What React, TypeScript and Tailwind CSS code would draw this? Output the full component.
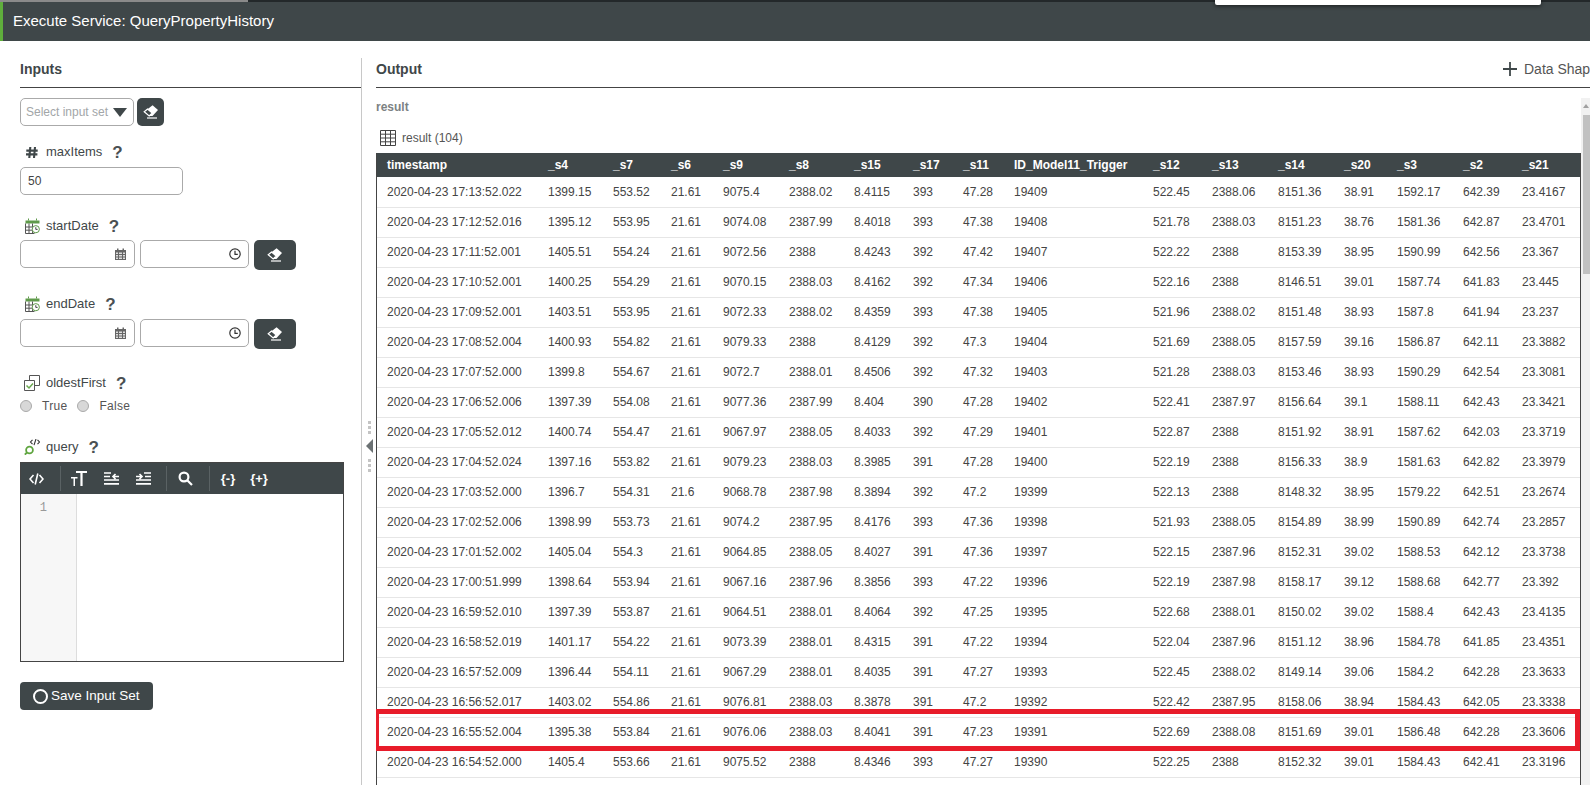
import React from "react";

const HEADERS = ["timestamp", "_s4", "_s7", "_s6", "_s9", "_s8", "_s15", "_s17", "_s11", "ID_Model11_Trigger", "_s12", "_s13", "_s14", "_s20", "_s3", "_s2", "_s21"];

const RAW = `17:13:52.022 1399.15 553.52 21.61 9075.4 2388.02 8.4115 393 47.28 19409 522.45 2388.06 8151.36 38.91 1592.17 642.39 23.4167
17:12:52.016 1395.12 553.95 21.61 9074.08 2387.99 8.4018 393 47.38 19408 521.78 2388.03 8151.23 38.76 1581.36 642.87 23.4701
17:11:52.001 1405.51 554.24 21.61 9072.56 2388 8.4243 392 47.42 19407 522.22 2388 8153.39 38.95 1590.99 642.56 23.367
17:10:52.001 1400.25 554.29 21.61 9070.15 2388.03 8.4162 392 47.34 19406 522.16 2388 8146.51 39.01 1587.74 641.83 23.445
17:09:52.001 1403.51 553.95 21.61 9072.33 2388.02 8.4359 393 47.38 19405 521.96 2388.02 8151.48 38.93 1587.8 641.94 23.237
17:08:52.004 1400.93 554.82 21.61 9079.33 2388 8.4129 392 47.3 19404 521.69 2388.05 8157.59 39.16 1586.87 642.11 23.3882
17:07:52.000 1399.8 554.67 21.61 9072.7 2388.01 8.4506 392 47.32 19403 521.28 2388.03 8153.46 38.93 1590.29 642.54 23.3081
17:06:52.006 1397.39 554.08 21.61 9077.36 2387.99 8.404 390 47.28 19402 522.41 2387.97 8156.64 39.1 1588.11 642.43 23.3421
17:05:52.012 1400.74 554.47 21.61 9067.97 2388.05 8.4033 392 47.29 19401 522.87 2388 8151.92 38.91 1587.62 642.03 23.3719
17:04:52.024 1397.16 553.82 21.61 9079.23 2388.03 8.3985 391 47.28 19400 522.19 2388 8156.33 38.9 1581.63 642.82 23.3979
17:03:52.000 1396.7 554.31 21.6 9068.78 2387.98 8.3894 392 47.2 19399 522.13 2388 8148.32 38.95 1579.22 642.51 23.2674
17:02:52.006 1398.99 553.73 21.61 9074.2 2387.95 8.4176 393 47.36 19398 521.93 2388.05 8154.89 38.99 1590.89 642.74 23.2857
17:01:52.002 1405.04 554.3 21.61 9064.85 2388.05 8.4027 391 47.36 19397 522.15 2387.96 8152.31 39.02 1588.53 642.12 23.3738
17:00:51.999 1398.64 553.94 21.61 9067.16 2387.96 8.3856 393 47.22 19396 522.19 2387.98 8158.17 39.12 1588.68 642.77 23.392
16:59:52.010 1397.39 553.87 21.61 9064.51 2388.01 8.4064 392 47.25 19395 522.68 2388.01 8150.02 39.02 1588.4 642.43 23.4135
16:58:52.019 1401.17 554.22 21.61 9073.39 2388.01 8.4315 391 47.22 19394 522.04 2387.96 8151.12 38.96 1584.78 641.85 23.4351
16:57:52.009 1396.44 554.11 21.61 9067.29 2388.01 8.4035 391 47.27 19393 522.45 2388.02 8149.14 39.06 1584.2 642.28 23.3633
16:56:52.017 1403.02 554.86 21.61 9076.81 2388.03 8.3878 391 47.2 19392 522.42 2387.95 8158.06 38.94 1584.43 642.05 23.3338
16:55:52.004 1395.38 553.84 21.61 9076.06 2388.03 8.4041 391 47.23 19391 522.69 2388.08 8151.69 39.01 1586.48 642.28 23.3606
16:54:52.000 1405.4 553.66 21.61 9075.52 2388 8.4346 393 47.27 19390 522.25 2388 8152.32 39.01 1584.43 642.41 23.3196`;

const ROWS = RAW.split("\n").map((line) => {
  const cells = line.split(" ");
  cells[0] = `2020-04-23 ${cells[0]}`;
  return cells;
});

const COL_WIDTHS = ["w-[161px]", "w-[65px]", "w-[58px]", "w-[52px]", "w-[66px]", "w-[65px]", "w-[59px]", "w-[50px]", "w-[51px]", "w-[139px]", "w-[59px]", "w-[66px]", "w-[66px]", "w-[53px]", "w-[66px]", "w-[59px]", "w-[68px]"];

const EraserIcon = () => (
  <svg width="16" height="16" viewBox="0 0 16 16" aria-hidden="true">
    <path d="M9.6 1.2 15 6 9.5 12 6.2 12 1.2 7.8Z" fill="#fff" />
    <path d="M4.6 5 1.2 7.8 6.2 12 9.2 9Z" fill="#3f4749" stroke="#fff" strokeWidth="1.2" />
    <path d="M4 14h10" stroke="#fff" strokeWidth="1.2" />
  </svg>
);

const SmallCalendar = () => (
  <svg width="11" height="12" viewBox="0 0 11 12" aria-hidden="true">
    <path d="M0 2h11v10H0Z" fill="#666" />
    <path d="M2 0.5h1.5v2H2ZM7.5 0.5H9v2H7.5Z" fill="#666" />
    <path d="M1 4.5h2v1.5H1ZM4 4.5h3v1.5H4ZM8 4.5h2v1.5H8ZM1 7h2v1.5H1ZM4 7h3v1.5H4ZM8 7h2v1.5H8ZM1 9.5h2V11H1ZM4 9.5h3V11H4ZM8 9.5h2V11H8Z" fill="#ddd" />
  </svg>
);

const SmallClock = () => (
  <svg width="12" height="12" viewBox="0 0 12 12" fill="none" stroke="#333" aria-hidden="true">
    <circle cx="6" cy="6" r="5.2" strokeWidth="1.2" />
    <path d="M6 2.8V6.4H8.8" strokeWidth="1.2" />
  </svg>
);

const NumberTypeIcon = () => (
  <svg width="12" height="11" viewBox="0 0 12 11" fill="none" stroke="#3f4749" strokeWidth="2.1" className="ml-[2px]" aria-hidden="true">
    <path d="M4.3 0 3.300 11M9 0 8 11M0.300 3.600h11.400M0 7.400h11.400" />
  </svg>
);

const DateTypeIcon = () => (
  <svg width="15" height="16" viewBox="0 0 15 16" fill="none" className="ml-[1px]" aria-hidden="true">
    <path d="M0.5 2.5h14v3H0.5Z" fill="#5f9a4a" />
    <path d="M3.5 0.5v2M11.5 0.5v2" stroke="#5f9a4a" />
    <path d="M0.5 5.5v10h9M0.5 9h8M0.5 12.2h8M4 5.5v10M7.5 5.5v10" stroke="#555" />
    <circle cx="10.8" cy="11.2" r="3.6" fill="#fff" stroke="#5f9a4a" />
    <path d="M10.8 9.2v2.2h1.8" stroke="#444" />
  </svg>
);

const BooleanTypeIcon = () => (
  <svg width="16" height="16" viewBox="0 0 16 16" fill="none" aria-hidden="true">
    <path d="M5.5 5.5V0.5h10v10h-5" stroke="#555" />
    <path d="M0.5 5.5h10v10h-10Z" fill="#fff" stroke="#555" />
    <path d="M2.5 10.5 5 13l4-4.5" stroke="#6aa84f" strokeWidth="1.5" />
  </svg>
);

const QueryTypeIcon = () => (
  <svg width="16" height="16" viewBox="0 0 16 16" fill="none" aria-hidden="true">
    <circle cx="5.5" cy="11" r="3.4" stroke="#5fa53f" strokeWidth="1.8" />
    <path d="M3 13.5 0.8 15.6" stroke="#5fa53f" strokeWidth="1.8" />
    <path d="M8.5 0.8 6.500 3l2 2.200M13.500 0.800l2 2.200-2 2.200M12 0l-2 6.200" stroke="#333" strokeWidth="1.1" />
  </svg>
);

const Label = ({ icon, name }: { icon: React.ReactNode; name: string }) => (
  <div className="flex items-center h-[18px] pl-1 text-[13px] text-[#3f4749]">
    <span className="w-[22px] shrink-0 flex items-center">{icon}</span>
    <span>{name}</span>
    <span className="ml-[10px] text-[17px] font-bold text-[#4a5052] leading-none">?</span>
  </div>
);

const DateInputs = ({ className }: { className: string }) => (
  <div className={`flex items-start ${className}`}>
    <div className="w-[115px] h-[28px] border border-[#aaa] rounded-[5px] flex items-center justify-end pr-[8px]">
      <SmallCalendar />
    </div>
    <div className="w-[109px] h-[28px] ml-[5px] border border-[#aaa] rounded-[5px] flex items-center justify-end pr-[7px]">
      <SmallClock />
    </div>
    <button className="w-[42px] h-[30px] ml-[5px] bg-[#3f4749] rounded-[5px] flex items-center justify-center">
      <EraserIcon />
    </button>
  </div>
);

const Radio = ({ label }: { label: string }) => (
  <label className="flex items-center text-[12px] text-[#555] tracking-[0.3px]">
    <span className="w-[12px] h-[12px] rounded-full bg-[#d8d8d8] border border-[#aaa] mr-[10px]" />
    {label}
  </label>
);

const ToolbarDivider = () => <span className="block w-px h-[25px] bg-[#5a6264]" />;

const Toolbar = () => (
  <div className="h-[31px] bg-[#3f4749] flex items-center text-white shrink-0">
    <span className="w-[39px] flex pl-[8px]">
      <svg width="15" height="14" viewBox="0 0 15 14" fill="none" stroke="#fff" strokeWidth="1.6" aria-hidden="true">
        <path d="M4.5 3 1 7l3.5 4M10.5 3 14 7l-3.5 4M8.8 1.5 6.2 12.5" />
      </svg>
    </span>
    <ToolbarDivider />
    <span className="ml-[10px] w-[16px] flex justify-center">
      <svg width="16" height="15" viewBox="0 0 16 15" fill="#fff" aria-hidden="true">
        <path d="M5 0h11v2h-4.400v13H9.400V2H5ZM0 6h6.500v1.500H4V15H2.500V7.500H0Z" />
      </svg>
    </span>
    <span className="ml-[16px] w-[16px] flex justify-center">
      <svg width="15" height="13" viewBox="0 0 15 13" fill="none" stroke="#fff" strokeWidth="1.7" aria-hidden="true">
        <path d="M0 1h7M0 4.500h6M0 8h15M0 11.800h15M15 4.500H9M11.500 2 9 4.500 11.500 7" />
      </svg>
    </span>
    <span className="ml-[16px] w-[16px] flex justify-center">
      <svg width="15" height="13" viewBox="0 0 15 13" fill="none" stroke="#fff" strokeWidth="1.7" aria-hidden="true">
        <path d="M8 1h7M9 4.500h6M0 8h15M0 11.800h15M0 4.500h6M3.500 2 6 4.500 3.500 7" />
      </svg>
    </span>
    <span className="ml-[15px]">
      <ToolbarDivider />
    </span>
    <span className="ml-[10px] w-[16px] flex justify-center">
      <svg width="15" height="15" viewBox="0 0 15 15" fill="none" stroke="#fff" strokeWidth="2.2" aria-hidden="true">
        <circle cx="6" cy="6" r="4.400" />
        <path d="m9.500 9.500 4.500 4.500" />
      </svg>
    </span>
    <span className="ml-[16px]">
      <ToolbarDivider />
    </span>
    <span className="ml-[10px] w-[16px] flex justify-center text-[13px] font-bold whitespace-nowrap">{"{-}"}</span>
    <span className="ml-[15px] w-[16px] flex justify-center text-[13px] font-bold whitespace-nowrap">{"{+}"}</span>
  </div>
);

const InputsPanel = () => (
  <div className="w-[362px] shrink-0 pl-5 border-r border-[#c8c8c8]">
    <div className="h-[30px] border-b border-[#444] text-[14px] font-bold text-[#3f4749] leading-[22px]">Inputs</div>
    <div className="flex mt-[10px]">
      <div className="w-[114px] h-[28px] border border-[#aaa] rounded-[5px] flex items-center pl-[5px] text-[12px] text-[#a2a6a8] whitespace-nowrap">
        Select input set
        <span className="ml-[5px] w-0 h-0 border-l-[7px] border-r-[7px] border-t-[9px] border-l-transparent border-r-transparent border-t-[#3f4749]" />
      </div>
      <button className="w-[27px] h-[28px] ml-[3px] bg-[#3f4749] rounded-[5px] flex items-center justify-center">
        <EraserIcon />
      </button>
    </div>
    <div className="mt-[17px]">
      <Label icon={<NumberTypeIcon />} name="maxItems" />
    </div>
    <div className="mt-[6px] w-[163px] h-[28px] border border-[#aaa] rounded-[5px] flex items-center pl-[7px] text-[12px] text-[#444]">50</div>
    <div className="mt-[22px]">
      <Label icon={<DateTypeIcon />} name="startDate" />
    </div>
    <DateInputs className="mt-[5px]" />
    <div className="mt-[25px]">
      <Label icon={<DateTypeIcon />} name="endDate" />
    </div>
    <DateInputs className="mt-[6px]" />
    <div className="mt-[25px]">
      <Label icon={<BooleanTypeIcon />} name="oldestFirst" />
    </div>
    <div className="flex gap-[10px] mt-[5px]">
      <Radio label="True" />
      <Radio label="False" />
    </div>
    <div className="mt-[23px]">
      <Label icon={<QueryTypeIcon />} name="query" />
    </div>
    <div className="mt-[6px] w-[324px] h-[200px] border border-[#444] flex flex-col">
      <Toolbar />
      <div className="flex-1 flex">
        <div className="w-[56px] bg-[#f7f7f7] border-r border-[#ddd] pt-[7px] pr-[29px] text-right text-[12px] leading-[15px] text-[#999] font-['Liberation_Mono',monospace]">
          1
        </div>
      </div>
    </div>
    <button className="mt-[20px] w-[133px] h-[28px] bg-[#3f4749] rounded-[4px] flex items-center pl-[13px] text-[13.5px] text-white whitespace-nowrap">
      <span className="w-[15px] h-[15px] rounded-full border-[2.5px] border-white mr-[3px]" />
      Save Input Set
    </button>
  </div>
);

const ResultTable = () => (
  <div className="relative w-[1205px] border-l border-r border-[#444]">
    <table className="table-fixed w-[1203px] border-collapse text-[12px] text-[#444]">
      <colgroup>
        {COL_WIDTHS.map((w, i) => (
          <col key={i} className={w} />
        ))}
      </colgroup>
      <thead>
        <tr className="h-[24px] bg-[#3f4749] text-white">
          {HEADERS.map((h) => (
            <th key={h} className="text-left font-bold pl-[10px] whitespace-nowrap">
              {h}
            </th>
          ))}
        </tr>
      </thead>
      <tbody>
        {ROWS.map((row) => (
          <tr key={row[0]} className="h-[30px] border-b border-[#e6e6e6]">
            {row.map((cell, i) => (
              <td key={i} className="pl-[10px] whitespace-nowrap">
                {cell}
              </td>
            ))}
          </tr>
        ))}
      </tbody>
    </table>
    <div className="h-[20px]" />
    {/* red annotation box round the 16:55 row */}
    <div className="absolute left-[-3px] top-[556px] w-[1206px] h-[42px] border-[5px] border-[#e81c2a] pointer-events-none" />
  </div>
);

const SplitterDots = () => (
  <span className="block w-[3px] h-[13px] border-y-[3px] border-[#c4c4c4] bg-[linear-gradient(#c4c4c4,#c4c4c4)] bg-[length:3px_3px] bg-center bg-no-repeat" />
);

const OutputPanel = () => (
  <div className="relative flex-1 min-w-0 pl-[14px]">
    {/* splitter handle */}
    <div className="absolute left-[3px] top-[363px] flex flex-col items-center w-[8px]">
      <SplitterDots />
      <span className="mt-[5px] w-0 h-0 border-y-[7px] border-r-[7px] border-y-transparent border-r-[#6b7173]" />
      <span className="mt-[6px]">
        <SplitterDots />
      </span>
    </div>
    <div className="h-[30px] border-b border-[#444] flex justify-between text-[14px] leading-[22px]">
      <span className="font-bold text-[#3f4749]">Output</span>
      <span className="w-[87px] overflow-hidden whitespace-nowrap flex items-start text-[#555]">
        <svg width="14" height="14" viewBox="0 0 14 14" fill="none" stroke="#3f4749" strokeWidth="1.8" className="mt-[4px] shrink-0 mr-[7px]" aria-hidden="true">
          <path d="M7 0v14M0 7h14" />
        </svg>
        <span className="shrink-0">Data Shapes</span>
      </span>
    </div>
    <div className="flex mt-[10px] h-[697px] overflow-hidden">
      <div className="w-[1205px] shrink-0">
        <div className="h-[18px] text-[12px] font-bold text-[#7c8284] leading-[18px]">result</div>
        <div className="h-[37px] flex items-end pb-[7px] pl-[4px] text-[12px] text-[#555]">
          <svg width="16" height="16" viewBox="0 0 16 16" fill="none" stroke="#444" aria-hidden="true" className="mr-[6px]">
            <path d="M0.500 0.500h15v15h-15ZM0.500 4.200h15M0.500 8h15M0.500 11.800h15M5.500 0.500v15M10.500 0.500v15" />
          </svg>
          <span className="leading-[16px]">result (104)</span>
        </div>
        <ResultTable />
      </div>
      <div className="w-[9px] shrink-0 bg-[#f1f1f1] flex flex-col items-end">
        <span className="mt-[6px] mr-[1px] w-0 h-0 border-x-[3px] border-b-[4px] border-x-transparent border-b-[#a0a0a0]" />
        <span className="mt-[7px] w-[7px] h-[159px] bg-[#c1c1c1]" />
      </div>
    </div>
  </div>
);

export default function App() {
  return (
    <div className="relative w-[1590px] h-[785px] overflow-hidden bg-white font-['Liberation_Sans',Arial,sans-serif]">
      <div className="h-[2px] flex">
        <div className="w-[248px] bg-[#8a8a8a]" />
        <div className="flex-1 bg-[#23282a]" />
      </div>
      <div className="h-[39px] bg-[#3f4749] border-l-[3px] border-[#5fae3c] pl-[10px] flex items-center text-[15px] text-white">
        Execute Service: QueryPropertyHistory
      </div>
      {/* edge of a dropdown sitting over the title bar */}
      <div className="absolute left-[1215px] top-0 w-[326px] h-[5px] bg-white rounded-b-[2px] shadow-[0_1px_4px_rgba(0,0,0,0.6)]" />
      <div className="flex pt-[17px]">
        <InputsPanel />
        <OutputPanel />
      </div>
    </div>
  );
}
